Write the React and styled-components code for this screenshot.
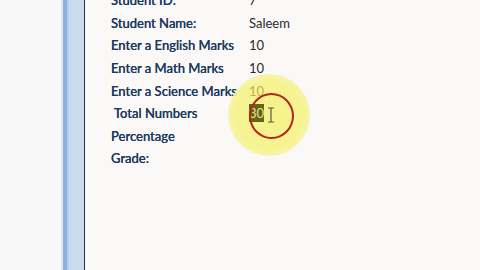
import React from "react";
import styled, { createGlobalStyle } from "styled-components";

const Global = createGlobalStyle`
  html, body { margin: 0; padding: 0; width: 480px; height: 270px; overflow: hidden; background: #f8f8f7; }
  #root { height: 270px; }
`;

const Screen = styled.div`
  display: flex;
  height: 270px;
  width: 480px;
  overflow: hidden;
`;

const LeftPane = styled.div`
  width: 61px;
  flex: none;
  background: #f8f8f8;
`;

const SideBar = styled.div`
  width: 24px;
  flex: none;
  display: flex;
`;

const Stripe = styled.div`
  width: ${p => p.$w}px;
  background: ${p => p.$c};
  flex: ${p => (p.$grow ? 1 : "none")};
`;

const Page = styled.div`
  flex: 1;
  background: #faf9f7;
  position: relative;
  padding-left: 26px;
`;

const Form = styled.div`
  display: grid;
  grid-template-columns: 138px auto;
  grid-auto-rows: 22.6px;
  align-items: center;
  margin-top: -11px;
  font-family: "Lato", "Open Sans", sans-serif;
  font-size: 13px;
  color: #1f3a5f;
`;

const Label = styled.div`
  white-space: pre;
  font-weight: 500;
  text-shadow: 0 0 0.4px #1f3a5f;
`;

const Value = styled.div`
  color: ${p => (p.$faded ? "#b9b35a" : "#2a2a2a")};
  position: relative;
  z-index: 2;
`;

const Selected = styled.span`
  background: #646418;
  color: #e8e68a;
  padding: 1px 0;
`;

const Spotlight = styled.div`
  position: absolute;
  left: 143px;
  top: 74px;
  width: 82px;
  height: 82px;
  border-radius: 50%;
  background: radial-gradient(circle, #f5f288 0%, #f6f394 60%, rgba(248,246,170,0.6) 85%, rgba(250,249,240,0) 100%);
  z-index: 1;
`;

const Ring = styled.div`
  position: absolute;
  left: 164px;
  top: 93px;
  width: 41px;
  height: 42px;
  border-radius: 50%;
  border: 2px solid #b3261a;
  z-index: 3;
`;

const Cursor = styled.svg`
  position: absolute;
  left: 182px;
  top: 107px;
  z-index: 4;
`;

const rows = [
  ["Student ID:", "7"],
  ["Student Name:", "Saleem"],
  ["Enter a English Marks", "10"],
  ["Enter a Math Marks", "10"],
  ["Enter a Science Marks", "10", "faded"],
  [" Total Numbers", "30", "sel"],
  ["Percentage", ""],
  ["Grade:", ""],
];

export default function App() {
  return (
    <>
      <Global />
      <Screen>
        <LeftPane />
        <SideBar>
          <Stripe $w={2} $c="#dde8f4" />
          <Stripe $w={4} $c="#8fb0dc" />
          <Stripe $w={2} $c="#b8cfe9" />
          <Stripe $grow $c="#c9dcee" />
          <Stripe $w={1} $c="#2a3440" />
        </SideBar>
        <Page>
          <Spotlight />
          <Form>
            {rows.map(([l, v, k]) => (
              <React.Fragment key={l}>
                <Label>{l}</Label>
                <Value $faded={k === "faded"}>
                  {k === "sel" ? <Selected>{v}</Selected> : v}
                </Value>
              </React.Fragment>
            ))}
          </Form>
          <Ring />
          <Cursor width="8" height="16" viewBox="0 0 8 16">
            <path d="M1 1h6M4 1v14M1 15h6" stroke="#555" strokeWidth="1.2" fill="none" />
          </Cursor>
        </Page>
      </Screen>
    </>
  );
}
